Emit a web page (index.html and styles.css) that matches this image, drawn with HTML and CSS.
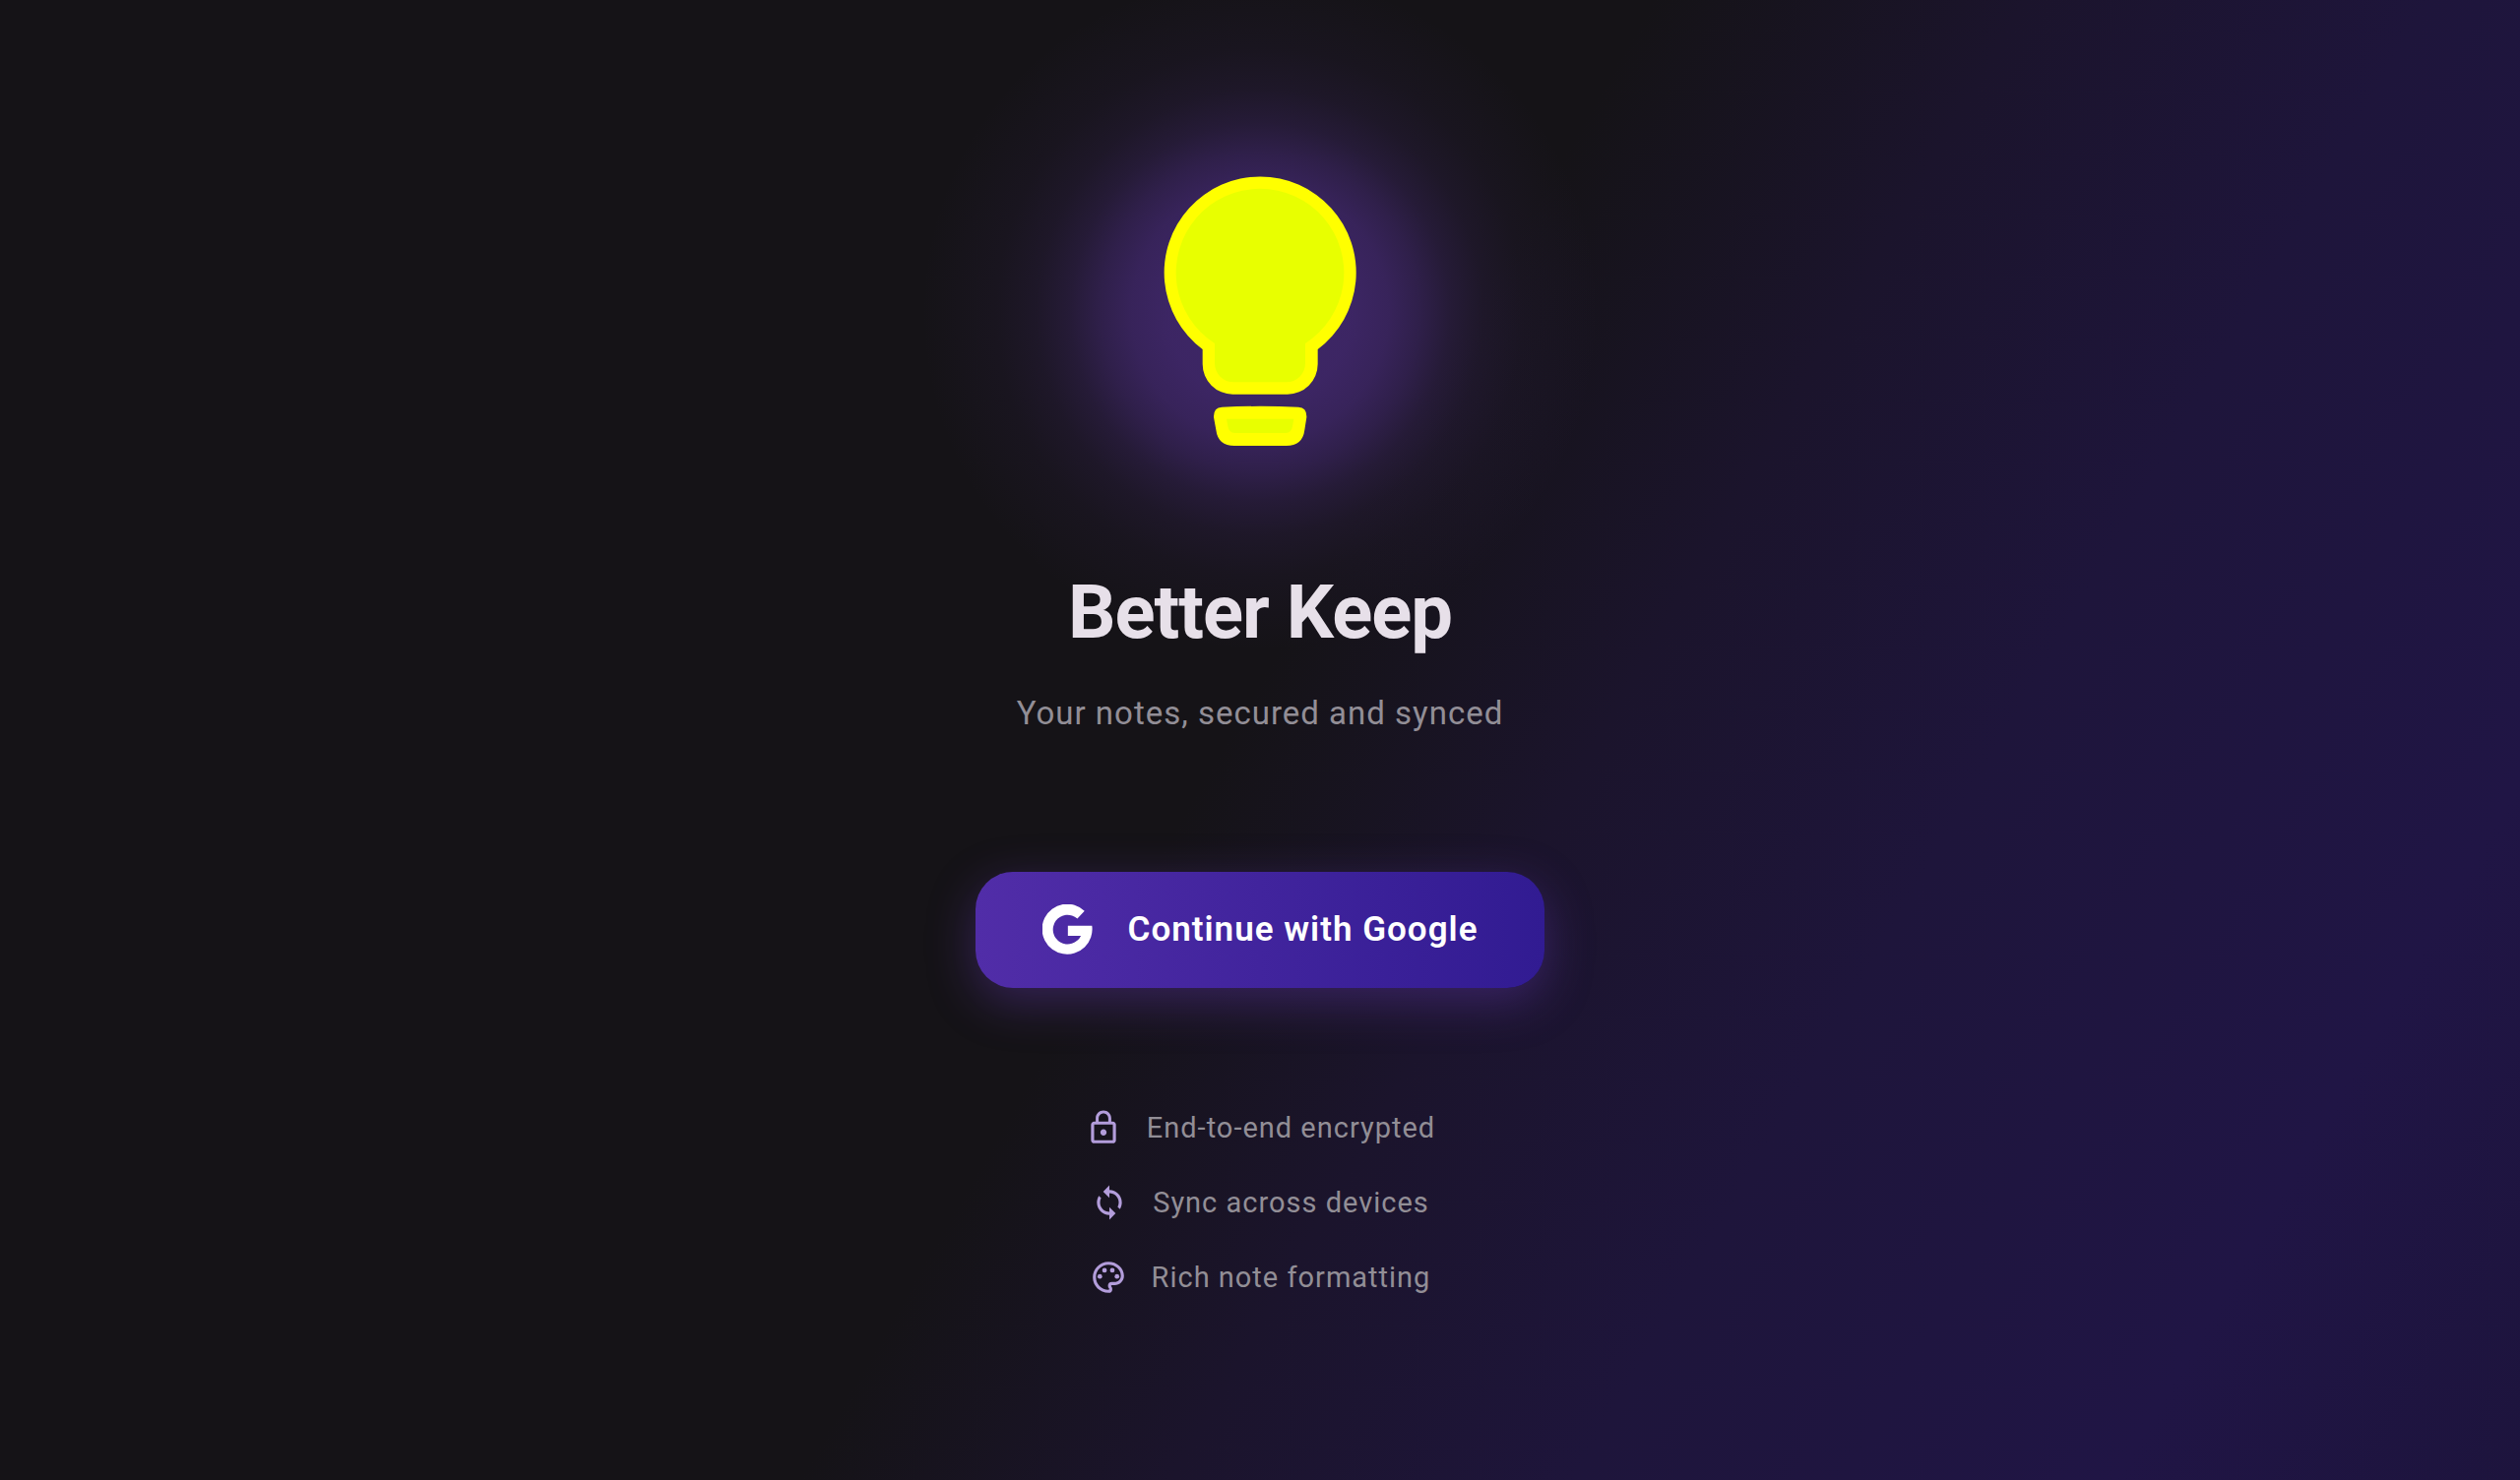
FILE: index.html
```
<!DOCTYPE html>
<html lang="en">
<head>
    <meta charset="UTF-8">
    <meta name="viewport" content="width=device-width, initial-scale=1.0">
    <title>Better Keep</title>
    <link rel="stylesheet" href="styles.css">
</head>
<body>
    <main class="login">
        <div class="logo">
            <svg class="logo-bulb" viewBox="-12 69 864 864" aria-hidden="true">
                <path fill="#ffff00" d="M245 615A292.500 292.500 0 1 1 596 615V660A92 92 0 0 1 504 752H337A92 92 0 0 1 245 660Z"/>
                <path fill="#e8ff00" d="M282 597A256 256 0 1 1 558 597V658A57 57 0 0 1 501 715H339A57 57 0 0 1 282 658Z"/>
                <path fill="#ffff00" d="M304 791Q420 786 537 791Q563 792 562 822L556 860Q550 909 500 909H342Q292 909 286 860L279 822Q278 792 304 791Z"/>
                <path fill="#e8ff00" d="M318 827H523L519 850Q516 870 499 870H343Q325 870 322 850Z"/>
            </svg>
        </div>

        <h1 class="title">Better Keep</h1>
        <p class="subtitle">Your notes, secured and synced</p>

        <button type="button" class="google-button">
            <svg class="google-icon" viewBox="52 62 154 156" aria-hidden="true">
                <path d="M181 82A77 77 0 1 0 204 127H130V158H170A45 45 0 1 1 159 105Z"/>
            </svg>
            <span>Continue with Google</span>
        </button>

        <ul class="features">
            <li class="feature">
                <svg class="feature-icon" viewBox="0 0 24 24" aria-hidden="true">
                    <path d="M12 17c1.100 0 2-.9 2-2s-.9-2-2-2-2 .9-2 2 .9 2 2 2zm6-9h-1V6c0-2.760-2.240-5-5-5S7 3.240 7 6v2H6c-1.100 0-2 .9-2 2v10c0 1.100.9 2 2 2h12c1.100 0 2-.9 2-2V10c0-1.100-.9-2-2-2zM8.900 6c0-1.710 1.390-3.100 3.100-3.100s3.100 1.390 3.100 3.100v2H8.900V6zM18 20H6V10h12v10z"/>
                </svg>
                <span>End-to-end encrypted</span>
            </li>
            <li class="feature">
                <svg class="feature-icon" viewBox="0 0 24 24" aria-hidden="true">
                    <path d="M12 4V1L8 5l4 4V6c3.310 0 6 2.690 6 6 0 1.010-.25 1.970-.7 2.800l1.460 1.460C19.540 15.030 20 13.570 20 12c0-4.420-3.580-8-8-8zm0 14c-3.310 0-6-2.690-6-6 0-1.010.25-1.970.7-2.800L5.240 7.740C4.460 8.970 4 10.430 4 12c0 4.420 3.580 8 8 8v3l4-4-4-4v3z"/>
                </svg>
                <span>Sync across devices</span>
            </li>
            <li class="feature">
                <svg class="feature-icon" viewBox="0 0 24 24" aria-hidden="true">
                    <path d="M12 22C6.490 22 2 17.510 2 12S6.490 2 12 2s10 4.040 10 9c0 3.310-2.690 6-6 6h-1.770c-.28 0-.5.22-.5.5 0 .12.05.23.13.33.41.47.64 1.060.64 1.670A2.500 2.500 0 0 1 12 22zm0-18c-4.410 0-8 3.590-8 8s3.590 8 8 8c.28 0 .5-.22.5-.5a.54.54 0 0 0-.14-.35c-.41-.46-.63-1.050-.63-1.650a2.500 2.500 0 0 1 2.500-2.500H16c2.210 0 4-1.790 4-4 0-3.860-3.590-7-8-7z"/>
                    <circle cx="6.500" cy="11.500" r="1.500"/>
                    <circle cx="9.500" cy="7.500" r="1.500"/>
                    <circle cx="14.500" cy="7.500" r="1.500"/>
                    <circle cx="17.500" cy="11.500" r="1.500"/>
                </svg>
                <span>Rich note formatting</span>
            </li>
        </ul>
    </main>
</body>
</html>
```
FILE: styles.css
```
:root {
    --background-color: #151317;
    --title-color: #e7e0e9;
    --text-color: #928e96;
    --icon-color: #b39ddb;
    --button-start: #512da8;
    --button-end: #311b92;
}

* {
    box-sizing: border-box;
    margin: 0;
    padding: 0;
}

body {
    font-family: Roboto, "Liberation Sans", Arial, sans-serif;
    background-color: var(--background-color);
}

.login {
    display: flex;
    flex-direction: column;
    align-items: center;
    justify-content: center;
    min-height: 100vh;
    padding: 0 24px 14px;
    overflow: hidden;
    background: linear-gradient(120deg, #151317 49%, #1b142c 60%, #1e153b 72%, #201545 88%, #1d143d 100%);
}

.logo {
    position: relative;
    width: 288px;
    height: 288px;
    margin-bottom: 116px;
}

/* soft halo behind the bulb */
.logo::before {
    content: "";
    position: absolute;
    inset: -200px;
    border-radius: 50%;
    background: radial-gradient(circle closest-side,
        rgba(103, 58, 183, 0.5) 0%,
        rgba(103, 58, 183, 0.48) 27%,
        rgba(103, 58, 183, 0.42) 38%,
        rgba(103, 58, 183, 0.32) 47%,
        rgba(103, 58, 183, 0.2) 56%,
        rgba(103, 58, 183, 0.11) 66%,
        rgba(103, 58, 183, 0.05) 78%,
        rgba(103, 58, 183, 0) 100%);
}

.logo-bulb {
    position: relative;
    display: block;
    width: 100%;
    height: 100%;
}

.title {
    position: relative;
    margin-bottom: 38px;
    font-size: 76px;
    font-weight: 700;
    line-height: 90px;
    letter-spacing: -1px;
    color: var(--title-color);
}

.subtitle {
    margin-bottom: 141px;
    font-size: 33px;
    line-height: 40px;
    letter-spacing: 1px;
    color: var(--text-color);
}

.google-button {
    display: flex;
    align-items: center;
    gap: 36px;
    height: 118px;
    margin-bottom: 123px;
    padding: 0 68px;
    border: none;
    border-radius: 38px;
    background: linear-gradient(90deg, var(--button-start), var(--button-end));
    box-shadow: 0 14px 48px rgba(103, 58, 183, 0.4);
    font-family: inherit;
    font-size: 35px;
    font-weight: 600;
    line-height: 42px;
    letter-spacing: 1px;
    color: #fff;
    cursor: pointer;
}

.google-icon {
    width: 51px;
    height: 52px;
    fill: currentColor;
}

.features {
    display: flex;
    flex-direction: column;
    align-items: center;
    gap: 38px;
    list-style: none;
}

.feature {
    display: flex;
    align-items: center;
    gap: 25px;
    font-size: 29px;
    line-height: 38px;
    letter-spacing: 1px;
    color: var(--text-color);
}

.feature-icon {
    width: 38px;
    height: 38px;
    fill: var(--icon-color);
}
```
